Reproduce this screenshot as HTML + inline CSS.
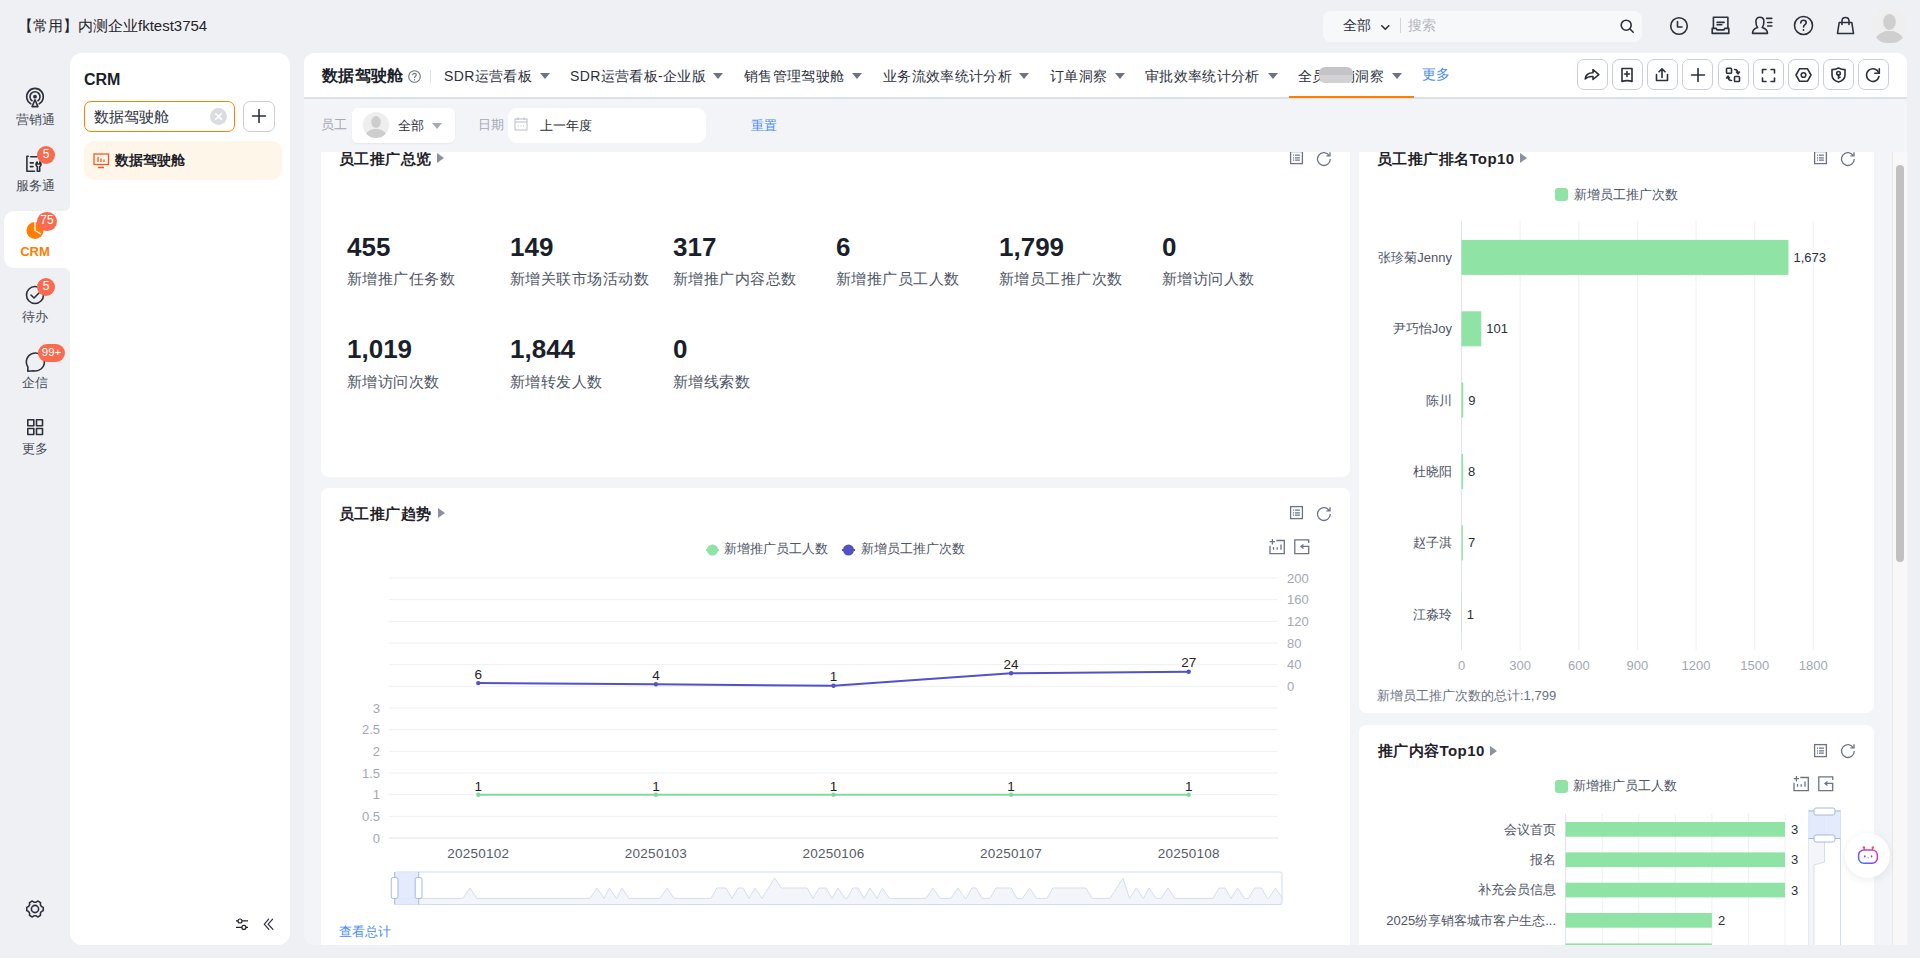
<!DOCTYPE html>
<html><head><meta charset="utf-8">
<style>
*{box-sizing:border-box;margin:0;padding:0}
html,body{width:1920px;height:958px;overflow:hidden}
body{position:relative;background:#eff0f3;font-family:"Liberation Sans",sans-serif;color:#1f2329}
.a{position:absolute}
.t{position:absolute;white-space:nowrap;line-height:1}
svg{position:absolute;overflow:visible}
.ic{fill:none;stroke:#2b303b;stroke-width:1.6;stroke-linecap:round;stroke-linejoin:round}
.badge{position:absolute;background:#f86b4f;color:#fff;border-radius:9px;font-size:12px;line-height:16px;height:18px;text-align:center}
.navt{position:absolute;left:0;width:70px;text-align:center;font-size:13px;color:#474d5a;line-height:1}
.card{position:absolute;background:#fff;border-radius:8px}
.ctitle{position:absolute;font-size:15px;letter-spacing:0.4px;font-weight:bold;color:#1f2329;line-height:1;white-space:nowrap}
.tri{position:absolute;width:0;height:0;border-top:5px solid transparent;border-bottom:5px solid transparent;border-left:7px solid #8a91a0}
.tabt{position:absolute;top:69px;font-size:14px;letter-spacing:0.35px;color:#2b303b;line-height:1;white-space:nowrap}
.tabtri{position:absolute;top:73px;width:0;height:0;border-left:5px solid transparent;border-right:5px solid transparent;border-top:6px solid #6b7385}
.tb{position:absolute;top:59px;width:31px;height:31px;border:1px solid #c9ceda;border-radius:7px;background:#fff}
.kv{position:absolute;font-size:26px;font-weight:bold;color:#1a1f2b;line-height:1;white-space:nowrap}
.kl{position:absolute;font-size:15px;letter-spacing:0.45px;color:#4e5566;line-height:1;white-space:nowrap}
.gi{fill:none;stroke:#6b7385;stroke-width:1.3}
</style></head><body>
<!-- ===== top header ===== -->
<div class="t" style="left:18px;top:18px;font-size:15px;color:#1f2329">【常用】内测企业fktest3754</div>
<div class="a" style="left:1323px;top:11px;width:319px;height:31px;background:#f7f8fa;border-radius:8px"></div>
<div class="t" style="left:1343px;top:18px;font-size:14px;color:#2b303b">全部</div>
<svg style="left:1381px;top:24.5px" width="9" height="6"><path d="M0.8 0.8 L4.3 4.3 L7.8 0.8" class="ic" stroke-width="1.3"/></svg>
<div class="a" style="left:1400px;top:18px;width:1px;height:15px;background:#d0d4dc"></div>
<div class="t" style="left:1408px;top:18px;font-size:14px;color:#b4b8c1">搜索</div>
<svg style="left:1620px;top:18.5px" width="15" height="15"><circle cx="6.2" cy="6.2" r="5" class="ic" stroke-width="1.5"/><path d="M10 10 L13.2 13.2" class="ic" stroke-width="1.5"/></svg>
<!-- clock -->
<svg style="left:1669px;top:16px" width="20" height="20"><circle cx="10" cy="10" r="8.3" class="ic"/><path d="M8.5 5.5 V11 H13" class="ic"/></svg>
<!-- inbox -->
<svg style="left:1711px;top:16px" width="20" height="20"><path d="M2.4 12.4 V1.2 H16.9 V12.4" class="ic" stroke-width="1.5" stroke-linejoin="miter"/><path d="M1.2 12.4 H5.3 L6 13.9 H13 L13.7 12.4 H17.8 V17.4 H1.2 Z" class="ic" stroke-width="1.5"/><path d="M6.1 6.4 H13.1 M6.1 8.8 H10.8" class="ic" stroke-width="1.4"/></svg>
<!-- contact -->
<svg style="left:1751px;top:16px" width="22" height="20"><path d="M1.5 17.4 C1.5 14 3.5 12.6 6.6 11.6 C5.2 10 4.9 8 4.9 5.5 C4.9 2.7 6.6 1.2 8.9 1.2 C11.2 1.2 12.9 2.7 12.9 5.5 C12.9 8 12.6 10 11.2 11.6 C14.3 12.6 16.5 14 16.5 17.4 Z" class="ic" stroke-width="1.5"/><path d="M15.6 2.4 H20.8 M16.6 6.5 H20.8 M16.6 10 H20.8" class="ic" stroke-width="1.5"/></svg>
<!-- help -->
<svg style="left:1793px;top:15px" width="21" height="21"><circle cx="10.5" cy="10.5" r="9" class="ic"/><path d="M7.8 8 C7.8 6.3 9 5.3 10.5 5.3 C12 5.3 13.2 6.3 13.2 7.8 C13.2 9.6 10.5 9.8 10.5 12" class="ic"/><circle cx="10.5" cy="15" r="0.9" fill="#2b303b"/></svg>
<!-- bag -->
<svg style="left:1836px;top:16px" width="19" height="19"><path d="M3.2 6.5 H15.8 L17.5 17.5 H1.5 Z" class="ic"/><path d="M6 8.5 V5 C6 2.8 7.3 1.5 9.5 1.5 C11.7 1.5 13 2.8 13 5 V8.5" class="ic"/></svg>
<!-- avatar -->
<div class="a" style="left:1872px;top:9px;width:35px;height:35px;border-radius:50%;background:#efefef;overflow:hidden">
  <svg style="left:0;top:0" width="35" height="35"><ellipse cx="17.5" cy="13" rx="6.3" ry="8" fill="#cfcfcf"/><path d="M3 31 C5 25 10 23.5 14 22 L21 22 C25 23.5 30 25 32 31 C28 35 7 35 3 31 Z" fill="#cfcfcf"/></svg>
</div>

<!-- ===== left nav ===== -->
<!-- 营销通 -->
<svg style="left:25px;top:86px" width="20" height="22"><path d="M5.85 17.9 A8.3 8.3 0 1 1 14.15 17.9" class="ic" stroke-width="1.7" stroke-linecap="butt"/><path d="M7.06 14.75 A5 5 0 1 1 12.94 14.75" class="ic" stroke-width="1.7" stroke-linecap="butt"/><circle cx="10" cy="10.7" r="1.9" fill="#2b303b"/><path d="M10 13.8 L7.1 20.6 H12.9 Z" class="ic" stroke-width="1.6"/></svg>
<div class="navt" style="top:113px">营销通</div>
<!-- 服务通 -->
<svg style="left:25px;top:154px" width="20" height="19"><path d="M3.2 2.2 H1.9 V17.3 H9.5" class="ic" stroke-width="1.6"/><path d="M5.6 2.7 H12" class="ic" stroke-width="1.6"/><path d="M5.3 8.9 H8.3 M5.3 12.6 H8" class="ic" stroke-width="1.5"/><path d="M12.2 8 C10.7 8.8 10.4 11.5 12.3 12.7 V17.3 H14.7 V12.7 C16.6 11.5 16.3 8.8 14.8 8 V10 H12.2 Z" class="ic" stroke-width="1.5"/></svg>
<div class="badge" style="left:37px;top:146px;width:18px">5</div>
<div class="navt" style="top:179px">服务通</div>
<!-- CRM active -->
<div class="a" style="left:4px;top:211px;width:66px;height:57px;background:#fff;border-radius:10px 0 0 10px"></div>
<div class="a" style="left:64px;top:205px;width:6px;height:6px;background:#fff"></div>
<div class="a" style="left:64px;top:205px;width:6px;height:6px;background:#eff0f3;border-radius:0 0 6px 0"></div>
<div class="a" style="left:64px;top:268px;width:6px;height:6px;background:#fff"></div>
<div class="a" style="left:64px;top:268px;width:6px;height:6px;background:#eff0f3;border-radius:0 6px 0 0"></div>
<svg style="left:26px;top:221px" width="19" height="19"><circle cx="9" cy="9.5" r="8.5" fill="#ff7d00"/><path d="M9 1 V9.5 L15 13" fill="none" stroke="#fff" stroke-width="1.3"/></svg>
<div class="badge" style="left:37px;top:212px;width:20px;height:19px;border-radius:10px;line-height:17px">75</div>
<div class="navt" style="top:245px;font-weight:bold;color:#ff7d00">CRM</div>
<!-- 待办 -->
<svg style="left:25px;top:285px" width="20" height="20"><circle cx="10" cy="10" r="8.5" class="ic"/><path d="M6 10 L9 13 L14 8" class="ic"/></svg>
<div class="badge" style="left:37px;top:278px;width:18px">5</div>
<div class="navt" style="top:310px">待办</div>
<!-- 企信 -->
<svg style="left:24.5px;top:351.5px" width="22" height="22"><path d="M8.6 18.8 A9 9 0 1 0 2.9 15 L2.8 19.2 Z" class="ic" stroke-width="1.3"/></svg>
<div class="badge" style="left:38px;top:344px;width:27px;font-size:11.5px">99+</div>
<div class="navt" style="top:376px">企信</div>
<!-- 更多 -->
<svg style="left:27px;top:419px" width="17" height="17"><rect x="0.8" y="0.8" width="6" height="6" class="ic" stroke-width="1.5"/><rect x="9.5" y="0.8" width="6" height="6" class="ic" stroke-width="1.5"/><rect x="0.8" y="9.5" width="6" height="6" class="ic" stroke-width="1.5"/><rect x="9.5" y="9.5" width="6" height="6" class="ic" stroke-width="1.5"/></svg>
<div class="navt" style="top:442px">更多</div>
<!-- settings -->
<svg style="left:23px;top:897px" width="24" height="24"><path d="M20.25 10.40 L20.25 13.60 L18.44 14.47 L17.36 16.34 L17.51 18.34 L14.73 19.94 L13.08 18.82 L10.92 18.82 L9.27 19.94 L6.49 18.34 L6.64 16.34 L5.56 14.47 L3.75 13.60 L3.75 10.40 L5.56 9.53 L6.64 7.66 L6.49 5.66 L9.27 4.06 L10.92 5.18 L13.08 5.18 L14.73 4.06 L17.51 5.66 L17.36 7.66 L18.44 9.53 Z" class="ic" stroke-width="1.5"/><circle cx="12" cy="12" r="3.6" class="ic" stroke-width="1.5"/></svg>

<!-- ===== left panel ===== -->
<div class="a" style="left:70px;top:53px;width:220px;height:892px;background:#fff;border-radius:12px"></div>
<div class="t" style="left:84px;top:72px;font-size:16px;font-weight:bold;color:#1a1f2b">CRM</div>
<div class="a" style="left:84px;top:101px;width:151px;height:31px;border:1px solid #ff8000;border-radius:7px;background:#fff"></div>
<div class="t" style="left:94px;top:109px;font-size:15px;color:#2b303b">数据驾驶舱</div>
<svg style="left:210px;top:108px" width="17" height="17"><circle cx="8.5" cy="8.5" r="8.5" fill="#d9dce3"/><path d="M5.8 5.8 L11.2 11.2 M11.2 5.8 L5.8 11.2" stroke="#fff" stroke-width="1.8" stroke-linecap="round"/></svg>
<div class="a" style="left:243px;top:101px;width:32px;height:31px;border:1px solid #c9ceda;border-radius:7px;background:#fff"></div>
<svg style="left:251px;top:108px" width="16" height="16"><path d="M8 1.5 V14.5 M1.5 8 H14.5" class="ic" stroke-width="1.5"/></svg>
<div class="a" style="left:84px;top:141px;width:198px;height:39px;background:#fef6e8;border-radius:10px"></div>
<svg style="left:93px;top:153px" width="17" height="16"><rect x="1" y="1" width="14.5" height="10.5" fill="none" stroke="#f05a2a" stroke-width="1.3"/><path d="M5 4 V9 M8 5.5 V9 M11 6.5 V9 M5 14.5 H11" stroke="#f05a2a" stroke-width="1.3" fill="none"/></svg>
<div class="t" style="left:115px;top:153px;font-size:14px;font-weight:bold;color:#1f2329">数据驾驶舱</div>
<svg style="left:0;top:0" width="300" height="958"><path d="M236 920.9 H248 M236 927.4 H248" stroke="#1f2329" stroke-width="1.15" fill="none"/><circle cx="240" cy="921" r="2" fill="#fff" stroke="#1f2329" stroke-width="1.2"/><circle cx="243.9" cy="927.4" r="2" fill="#fff" stroke="#1f2329" stroke-width="1.2"/><path d="M268.6 919.1 L264.3 924.2 L268.9 929.4 M272.6 919.1 L268.2 924.2 L272.9 929.4" stroke="#2b303b" stroke-width="1.2" fill="none" stroke-linecap="round"/></svg>

<!-- ===== main panel ===== -->
<div class="a" style="left:304px;top:53px;width:1603px;height:892px;background:#f3f4f8;border-radius:10px;overflow:hidden">
  <div class="a" style="left:0;top:0;width:1603px;height:46px;background:#fff;border-bottom:2px solid #dae1eb"></div>
</div>
<div class="t" style="left:322px;top:68px;font-size:16px;font-weight:bold;letter-spacing:0.25px;color:#1a1f2b">数据驾驶舱</div>
<svg style="left:408px;top:69.7px" width="13" height="13"><circle cx="6.5" cy="6.5" r="5.8" fill="none" stroke="#6b7385" stroke-width="1.1"/><path d="M4.7 5.2 C4.7 4.1 5.5 3.4 6.5 3.4 C7.5 3.4 8.3 4.1 8.3 5 C8.3 6.2 6.5 6.3 6.5 7.9" fill="none" stroke="#6b7385" stroke-width="1.1"/><circle cx="6.5" cy="9.7" r="0.65" fill="#6b7385"/></svg>
<div class="a" style="left:430px;top:70px;width:1px;height:13px;background:#dfe2e8"></div>

<div class="tabt" style="left:444px">SDR运营看板</div><div class="tabtri" style="left:540px"></div>
<div class="tabt" style="left:570px">SDR运营看板-企业版</div><div class="tabtri" style="left:713px"></div>
<div class="tabt" style="left:744px">销售管理驾驶舱</div><div class="tabtri" style="left:852px"></div>
<div class="tabt" style="left:883px">业务流效率统计分析</div><div class="tabtri" style="left:1019px"></div>
<div class="tabt" style="left:1050px">订单洞察</div><div class="tabtri" style="left:1115px"></div>
<div class="tabt" style="left:1145px">审批效率统计分析</div><div class="tabtri" style="left:1268px"></div>
<div class="tabt" style="left:1298px">全员营销洞察</div><div class="tabtri" style="left:1392px"></div>
<div class="a" style="left:1319px;top:67px;width:34px;height:16px;background:linear-gradient(#c4c4c6 0%,#c4c4c6 50%,#d2d2d4 50%,#d2d2d4 100%);border-radius:6px;filter:blur(0.5px)"></div>
<div class="tabt" style="left:1422px;top:67px;color:#4a8cf7">更多</div>
<div class="a" style="left:1289px;top:96px;width:125px;height:2px;background:#ff8000"></div>

<!-- toolbar buttons -->
<div class="tb" style="left:1577.0px"></div>
<div class="tb" style="left:1612.0px"></div>
<div class="tb" style="left:1647.0px"></div>
<div class="tb" style="left:1682.0px"></div>
<div class="tb" style="left:1718.0px"></div>
<div class="tb" style="left:1753.0px"></div>
<div class="tb" style="left:1788.0px"></div>
<div class="tb" style="left:1823.0px"></div>
<div class="tb" style="left:1858.0px"></div>
<!-- share -->
<svg style="left:1584px;top:66.8px" width="16" height="16"><path d="M1.2 12 C1.5 8 4 5.7 9 5.7 V2.5 L14.8 7.7 L9 12.5 V9.5 C5.5 9.3 3 10 1.2 12 Z" class="ic" stroke-width="1.10"/></svg>
<!-- bookmark plus -->
<svg style="left:1620px;top:66.8px" width="14" height="16"><path d="M2 1.5 H12 V14.5 C9.5 13.3 4.5 13.3 2 14.5 Z" class="ic" stroke-width="1.10" stroke-linejoin="miter"/><path d="M7 4.5 V9.5 M4.5 7 H9.5" class="ic" stroke-width="1.00"/></svg>
<!-- upload -->
<svg style="left:1654px;top:66.8px" width="16" height="16"><path d="M2.5 7.5 V13.5 H13.5 V7.5" class="ic" stroke-width="1.30" stroke-linejoin="miter"/><path d="M8 10.5 V1.8 M5 4.8 L8 1.8 L11 4.8" class="ic" stroke-width="1.10"/></svg>
<!-- plus -->
<svg style="left:1690px;top:66.8px" width="16" height="16"><path d="M8 1.5 V14.5 M1.5 8 H14.5" class="ic" stroke-width="1.3"/></svg>
<!-- switch -->
<svg style="left:1725px;top:66.8px" width="16" height="16"><rect x="1.5" y="1.3" width="5" height="5" rx="0.8" class="ic" stroke-width="1.10"/><rect x="9.5" y="9.5" width="5" height="5" rx="0.8" class="ic" stroke-width="1.10"/><path d="M9.5 2.5 C12 2.5 13 4 13 6.5 M11.5 5 L13 6.8 L14.5 5" class="ic" stroke-width="1.00"/><path d="M6.5 13.5 C4 13.5 3 12 3 9.5 M1.5 11 L3 9.2 L4.5 11" class="ic" stroke-width="1.00"/></svg>
<!-- fullscreen -->
<svg style="left:1761px;top:67.5px" width="15" height="15"><path d="M1.5 5 V1.5 H5 M10 1.5 H13.5 V5 M13.5 10 V13.5 H10 M5 13.5 H1.5 V10" class="ic" stroke-width="1.30" stroke-linecap="butt" stroke-linejoin="miter"/></svg>
<!-- hex settings -->
<svg style="left:1795px;top:66.8px" width="17" height="16"><path d="M4.5 1.8 H12.5 L16 8 L12.5 14.2 H4.5 L1 8 Z" class="ic" stroke-width="1.20"/><circle cx="8.5" cy="8" r="2.3" class="ic" stroke-width="1.20"/></svg>
<!-- shield key -->
<svg style="left:1831px;top:66.8px" width="15" height="16"><path d="M7.5 1 C9.5 2 11.5 2.6 14 2.6 V8 C14 11.5 11.5 13.8 7.5 15 C3.5 13.8 1 11.5 1 8 V2.6 C3.5 2.6 5.5 2 7.5 1 Z" class="ic" stroke-width="1.10"/><circle cx="7.5" cy="6.3" r="1.8" class="ic" stroke-width="1.00"/><path d="M7.5 8 V11.5 M7.5 10.3 H9" class="ic" stroke-width="1.00"/></svg>
<!-- refresh -->
<svg style="left:1865px;top:66.8px" width="16" height="16"><path d="M13.8 6 A6.3 6.3 0 1 0 14 9.5" class="ic" stroke-width="1.30"/><path d="M14.3 1.8 V6.3 H9.8" class="ic" stroke-width="1.30"/></svg>

<!-- filter bar -->
<div class="t" style="left:321px;top:118px;font-size:13px;color:#a3a8b3">员工</div>
<div class="a" style="left:352px;top:108px;width:103px;height:35px;background:#fff;border-radius:6px;box-shadow:0 1px 2px rgba(0,0,0,0.06)"></div>
<div class="a" style="left:363px;top:112px;width:26px;height:26px;border-radius:50%;background:#eeeeee;overflow:hidden">
  <svg style="left:0;top:0" width="26" height="26"><ellipse cx="13" cy="10" rx="4.8" ry="6" fill="#cdcdcd"/><path d="M2 23.5 C4 19 7.5 18 10.5 17 L15.5 17 C18.5 18 22 19 24 23.5 C20 27 6 27 2 23.5 Z" fill="#cdcdcd"/></svg>
</div>
<div class="t" style="left:398px;top:118.5px;font-size:13px;color:#2b303b">全部</div>
<div class="a" style="left:432.3px;top:123px;width:0;height:0;border-left:5.7px solid transparent;border-right:5.7px solid transparent;border-top:6px solid #a5abb8"></div>
<div class="t" style="left:478px;top:118px;font-size:13px;color:#a3a8b3">日期</div>
<div class="a" style="left:508px;top:108px;width:198px;height:35px;background:#fff;border-radius:9px"></div>
<svg style="left:514px;top:117px" width="14" height="14"><rect x="1" y="2" width="12" height="11" fill="none" stroke="#b8bdc7" stroke-width="1"/><path d="M1 5 H13 M4 0.5 V3 M10 0.5 V3" stroke="#b8bdc7" stroke-width="1" fill="none"/><path d="M4 9 H5 M6.5 9 H7.5 M9 9 H10" stroke="#b8bdc7" stroke-width="1"/></svg>
<div class="t" style="left:540px;top:118.7px;font-size:13px;color:#2b303b">上一年度</div>
<div class="t" style="left:751px;top:120px;font-size:12.5px;color:#4a8cf7">重置</div>

<div class="a" style="left:0;top:0;width:1920px;height:945px;clip-path:inset(152px 0 0 0)">
<div class="card" style="left:321px;top:133px;width:1029px;height:344px"></div>
<div class="card" style="left:321px;top:488px;width:1029px;height:470px"></div>
<div class="card" style="left:1359px;top:133px;width:515px;height:580px"></div>
<div class="card" style="left:1359px;top:725px;width:515px;height:240px"></div>
<div class="ctitle" style="left:339px;top:150.5px">员工推广总览</div>
<div class="tri" style="left:437px;top:153px"></div>
<svg style="left:1289px;top:151px" width="14" height="14"><rect x="1.6" y="0.6" width="11.8" height="12" class="gi" stroke-width="1.2"/><path d="M4 4.1 H5.1 M6 4.1 H10.9 M4 6.8 H5.1 M6 6.8 H10.9 M4 9.2 H5.1 M6 9.2 H10.9" class="gi" stroke-width="1.1"/></svg>
<svg style="left:1316px;top:150.5px" width="16" height="16"><path d="M13.3 4.6 A6.4 6.4 0 1 0 14.3 8" class="gi" stroke-width="1.3"/><path d="M14 1.2 V4.8 H10.4" class="gi" stroke-width="1.3"/></svg>
<div class="ctitle" style="left:339px;top:505.5px">员工推广趋势</div>
<div class="tri" style="left:438px;top:508px"></div>
<svg style="left:1289px;top:506px" width="14" height="14"><rect x="1.6" y="0.6" width="11.8" height="12" class="gi" stroke-width="1.2"/><path d="M4 4.1 H5.1 M6 4.1 H10.9 M4 6.8 H5.1 M6 6.8 H10.9 M4 9.2 H5.1 M6 9.2 H10.9" class="gi" stroke-width="1.1"/></svg>
<svg style="left:1316px;top:505.5px" width="16" height="16"><path d="M13.3 4.6 A6.4 6.4 0 1 0 14.3 8" class="gi" stroke-width="1.3"/><path d="M14 1.2 V4.8 H10.4" class="gi" stroke-width="1.3"/></svg>
<div class="ctitle" style="left:1377px;top:150.5px">员工推广排名Top10</div>
<div class="tri" style="left:1520px;top:153px"></div>
<svg style="left:1813px;top:151px" width="14" height="14"><rect x="1.6" y="0.6" width="11.8" height="12" class="gi" stroke-width="1.2"/><path d="M4 4.1 H5.1 M6 4.1 H10.9 M4 6.8 H5.1 M6 6.8 H10.9 M4 9.2 H5.1 M6 9.2 H10.9" class="gi" stroke-width="1.1"/></svg>
<svg style="left:1840px;top:150.5px" width="16" height="16"><path d="M13.3 4.6 A6.4 6.4 0 1 0 14.3 8" class="gi" stroke-width="1.3"/><path d="M14 1.2 V4.8 H10.4" class="gi" stroke-width="1.3"/></svg>
<div class="ctitle" style="left:1378px;top:743.0px">推广内容Top10</div>
<div class="tri" style="left:1490px;top:745.5px"></div>
<svg style="left:1813px;top:743.5px" width="14" height="14"><rect x="1.6" y="0.6" width="11.8" height="12" class="gi" stroke-width="1.2"/><path d="M4 4.1 H5.1 M6 4.1 H10.9 M4 6.8 H5.1 M6 6.8 H10.9 M4 9.2 H5.1 M6 9.2 H10.9" class="gi" stroke-width="1.1"/></svg>
<svg style="left:1840px;top:743.0px" width="16" height="16"><path d="M13.3 4.6 A6.4 6.4 0 1 0 14.3 8" class="gi" stroke-width="1.3"/><path d="M14 1.2 V4.8 H10.4" class="gi" stroke-width="1.3"/></svg>
<div class="kv" style="left:347px;top:234px">455</div>
<div class="kl" style="left:347px;top:271.0px">新增推广任务数</div>
<div class="kv" style="left:510px;top:234px">149</div>
<div class="kl" style="left:510px;top:271.0px">新增关联市场活动数</div>
<div class="kv" style="left:673px;top:234px">317</div>
<div class="kl" style="left:673px;top:271.0px">新增推广内容总数</div>
<div class="kv" style="left:836px;top:234px">6</div>
<div class="kl" style="left:836px;top:271.0px">新增推广员工人数</div>
<div class="kv" style="left:999px;top:234px">1,799</div>
<div class="kl" style="left:999px;top:271.0px">新增员工推广次数</div>
<div class="kv" style="left:1162px;top:234px">0</div>
<div class="kl" style="left:1162px;top:271.0px">新增访问人数</div>
<div class="kv" style="left:347px;top:336px">1,019</div>
<div class="kl" style="left:347px;top:374.0px">新增访问次数</div>
<div class="kv" style="left:510px;top:336px">1,844</div>
<div class="kl" style="left:510px;top:374.0px">新增转发人数</div>
<div class="kv" style="left:673px;top:336px">0</div>
<div class="kl" style="left:673px;top:374.0px">新增线索数</div>
<svg style="left:700px;top:541px" width="280" height="18"><path d="M6 9 H19" stroke="#8ee3a5" stroke-width="2"/><circle cx="12.5" cy="9" r="5.5" fill="#8ee3a5"/><path d="M142 9 H155" stroke="#5152c6" stroke-width="2"/><circle cx="148.5" cy="9" r="5.5" fill="#5152c6"/></svg>
<div class="t" style="left:724px;top:542px;font-size:13px;color:#4e5566">新增推广员工人数</div>
<div class="t" style="left:861px;top:542px;font-size:13px;color:#4e5566">新增员工推广次数</div>
<svg style="left:1269px;top:539px" width="17" height="16"><path d="M7.3 1.5 H15.3 V14.6 H1 V6.7" class="gi" stroke-width="1.15" stroke-linejoin="miter"/><path d="M3.4 0 V5.4 M0.7 2.7 H6.1" class="gi" stroke-width="1.1"/><path d="M4.5 8 V10.7 M8.2 8.2 V10.7 M12 5.4 V10.7" class="gi" stroke-width="1.1"/></svg>
<svg style="left:1294px;top:539px" width="16" height="16"><path d="M14.7 4 V0.8 H0.8 V14.7 H14.7 V7.4 H7" class="gi" stroke-width="1.15" stroke-linejoin="miter"/><path d="M9.5 5.4 L7 7.4 L9.5 9.6" class="gi" stroke-width="1.15"/></svg>
<svg style="left:0;top:0" width="1920" height="958"><path d="M389 578.00 H1278" stroke="#eef0f3" stroke-width="1"/><path d="M389 599.67 H1278" stroke="#eef0f3" stroke-width="1"/><path d="M389 621.33 H1278" stroke="#eef0f3" stroke-width="1"/><path d="M389 643.00 H1278" stroke="#eef0f3" stroke-width="1"/><path d="M389 664.67 H1278" stroke="#eef0f3" stroke-width="1"/><path d="M389 686.33 H1278" stroke="#eef0f3" stroke-width="1"/><path d="M389 708.00 H1278" stroke="#eef0f3" stroke-width="1"/><path d="M389 729.67 H1278" stroke="#eef0f3" stroke-width="1"/><path d="M389 751.33 H1278" stroke="#eef0f3" stroke-width="1"/><path d="M389 773.00 H1278" stroke="#eef0f3" stroke-width="1"/><path d="M389 794.67 H1278" stroke="#eef0f3" stroke-width="1"/><path d="M389 816.33 H1278" stroke="#eef0f3" stroke-width="1"/><path d="M389 838.00 H1278" stroke="#dfe4ee" stroke-width="1"/><polyline points="478.3,683.1 655.9,684.2 833.5,685.8 1011.1,673.3 1188.7,671.7" fill="none" stroke="#5152c6" stroke-width="2"/><circle cx="478.3" cy="683.1" r="2.2" fill="#5152c6"/><circle cx="655.9" cy="684.2" r="2.2" fill="#5152c6"/><circle cx="833.5" cy="685.8" r="2.2" fill="#5152c6"/><circle cx="1011.1" cy="673.3" r="2.2" fill="#5152c6"/><circle cx="1188.7" cy="671.7" r="2.2" fill="#5152c6"/><path d="M478.3 794.67 H1188.7" stroke="#7fdc9b" stroke-width="2"/><circle cx="478.3" cy="794.7" r="2.2" fill="#7fdc9b"/><circle cx="655.9" cy="794.7" r="2.2" fill="#7fdc9b"/><circle cx="833.5" cy="794.7" r="2.2" fill="#7fdc9b"/><circle cx="1011.1" cy="794.7" r="2.2" fill="#7fdc9b"/><circle cx="1188.7" cy="794.7" r="2.2" fill="#7fdc9b"/></svg>
<div class="t" style="left:458.3px;width:40px;text-align:center;top:667.6px;font-size:13.5px;color:#1f2329">6</div>
<div class="t" style="left:635.9px;width:40px;text-align:center;top:668.7px;font-size:13.5px;color:#1f2329">4</div>
<div class="t" style="left:813.5px;width:40px;text-align:center;top:670.3px;font-size:13.5px;color:#1f2329">1</div>
<div class="t" style="left:991.1px;width:40px;text-align:center;top:657.8px;font-size:13.5px;color:#1f2329">24</div>
<div class="t" style="left:1168.7px;width:40px;text-align:center;top:656.2px;font-size:13.5px;color:#1f2329">27</div>
<div class="t" style="left:458.3px;width:40px;text-align:center;top:780.2px;font-size:13.5px;color:#1f2329">1</div>
<div class="t" style="left:635.9px;width:40px;text-align:center;top:780.2px;font-size:13.5px;color:#1f2329">1</div>
<div class="t" style="left:813.5px;width:40px;text-align:center;top:780.2px;font-size:13.5px;color:#1f2329">1</div>
<div class="t" style="left:991.1px;width:40px;text-align:center;top:780.2px;font-size:13.5px;color:#1f2329">1</div>
<div class="t" style="left:1168.7px;width:40px;text-align:center;top:780.2px;font-size:13.5px;color:#1f2329">1</div>
<div class="t" style="left:1287px;top:571.5px;font-size:13px;color:#a3a8b3">200</div>
<div class="t" style="left:1287px;top:593.2px;font-size:13px;color:#a3a8b3">160</div>
<div class="t" style="left:1287px;top:614.8px;font-size:13px;color:#a3a8b3">120</div>
<div class="t" style="left:1287px;top:636.5px;font-size:13px;color:#a3a8b3">80</div>
<div class="t" style="left:1287px;top:658.2px;font-size:13px;color:#a3a8b3">40</div>
<div class="t" style="left:1287px;top:679.8px;font-size:13px;color:#a3a8b3">0</div>
<div class="t" style="left:330px;width:50px;text-align:right;top:701.5px;font-size:13px;color:#a3a8b3">3</div>
<div class="t" style="left:330px;width:50px;text-align:right;top:723.2px;font-size:13px;color:#a3a8b3">2.5</div>
<div class="t" style="left:330px;width:50px;text-align:right;top:744.8px;font-size:13px;color:#a3a8b3">2</div>
<div class="t" style="left:330px;width:50px;text-align:right;top:766.5px;font-size:13px;color:#a3a8b3">1.5</div>
<div class="t" style="left:330px;width:50px;text-align:right;top:788.2px;font-size:13px;color:#a3a8b3">1</div>
<div class="t" style="left:330px;width:50px;text-align:right;top:809.8px;font-size:13px;color:#a3a8b3">0.5</div>
<div class="t" style="left:330px;width:50px;text-align:right;top:831.5px;font-size:13px;color:#a3a8b3">0</div>
<div class="t" style="left:428.3px;width:100px;text-align:center;top:847px;font-size:13.5px;letter-spacing:0.25px;color:#555b68">20250102</div>
<div class="t" style="left:605.9px;width:100px;text-align:center;top:847px;font-size:13.5px;letter-spacing:0.25px;color:#555b68">20250103</div>
<div class="t" style="left:783.5px;width:100px;text-align:center;top:847px;font-size:13.5px;letter-spacing:0.25px;color:#555b68">20250106</div>
<div class="t" style="left:961.1px;width:100px;text-align:center;top:847px;font-size:13.5px;letter-spacing:0.25px;color:#555b68">20250107</div>
<div class="t" style="left:1138.7px;width:100px;text-align:center;top:847px;font-size:13.5px;letter-spacing:0.25px;color:#555b68">20250108</div>
<svg style="left:0;top:0" width="1920" height="958"><polygon points="395.0,898.4 463.0,898.4 470.0,888.0 477.0,898.4 590.0,898.4 597.0,888.0 604.0,898.4 604.0,898.4 609.5,888.0 616.5,898.4 616.5,898.4 622.0,888.0 629.0,898.4 660.0,898.4 667.0,888.0 674.0,898.4 711.0,898.4 717.0,888.0 726.0,888.0 732.0,898.4 732.0,898.4 738.0,888.0 743.0,888.0 749.0,898.4 749.0,898.4 755.0,888.0 762.0,898.4 762.0,898.4 774.5,878.0 781.5,888.0 807.0,888.0 813.0,898.4 813.0,898.4 819.0,888.0 826.0,888.0 832.0,898.4 832.0,898.4 838.0,888.0 845.0,898.4 847.0,898.4 853.0,888.0 858.0,888.0 864.0,898.4 864.0,898.4 870.0,888.0 877.0,898.4 877.0,898.4 882.4,888.0 889.4,898.4 926.0,898.4 933.0,888.0 940.0,898.4 951.0,898.4 958.0,888.0 965.0,898.4 966.0,898.4 972.0,888.0 976.0,888.0 982.0,898.4 990.0,898.4 996.0,888.0 1011.0,888.0 1017.0,898.4 1022.5,898.4 1029.5,888.0 1036.5,898.4 1047.0,898.4 1053.0,888.0 1086.0,888.0 1092.0,898.4 1110.0,898.4 1123.0,878.0 1129.5,898.4 1129.5,898.4 1136.4,888.0 1143.4,898.4 1143.4,898.4 1149.0,888.0 1156.0,898.4 1161.0,898.4 1168.0,888.0 1175.0,898.4 1213.0,898.4 1219.0,888.0 1225.0,888.0 1231.0,898.4 1231.0,898.4 1237.6,888.0 1244.6,898.4 1248.5,898.4 1254.5,888.0 1261.5,888.0 1267.5,898.4 1268.6,898.4 1275.6,888.0 1282.6,898.4 1282.6,898.4 1282,904.5 395,904.5" fill="#f3f5fb"/><polyline points="395.0,898.4 463.0,898.4 470.0,888.0 477.0,898.4 590.0,898.4 597.0,888.0 604.0,898.4 604.0,898.4 609.5,888.0 616.5,898.4 616.5,898.4 622.0,888.0 629.0,898.4 660.0,898.4 667.0,888.0 674.0,898.4 711.0,898.4 717.0,888.0 726.0,888.0 732.0,898.4 732.0,898.4 738.0,888.0 743.0,888.0 749.0,898.4 749.0,898.4 755.0,888.0 762.0,898.4 762.0,898.4 774.5,878.0 781.5,888.0 807.0,888.0 813.0,898.4 813.0,898.4 819.0,888.0 826.0,888.0 832.0,898.4 832.0,898.4 838.0,888.0 845.0,898.4 847.0,898.4 853.0,888.0 858.0,888.0 864.0,898.4 864.0,898.4 870.0,888.0 877.0,898.4 877.0,898.4 882.4,888.0 889.4,898.4 926.0,898.4 933.0,888.0 940.0,898.4 951.0,898.4 958.0,888.0 965.0,898.4 966.0,898.4 972.0,888.0 976.0,888.0 982.0,898.4 990.0,898.4 996.0,888.0 1011.0,888.0 1017.0,898.4 1022.5,898.4 1029.5,888.0 1036.5,898.4 1047.0,898.4 1053.0,888.0 1086.0,888.0 1092.0,898.4 1110.0,898.4 1123.0,878.0 1129.5,898.4 1129.5,898.4 1136.4,888.0 1143.4,898.4 1143.4,898.4 1149.0,888.0 1156.0,898.4 1161.0,898.4 1168.0,888.0 1175.0,898.4 1213.0,898.4 1219.0,888.0 1225.0,888.0 1231.0,898.4 1231.0,898.4 1237.6,888.0 1244.6,898.4 1248.5,898.4 1254.5,888.0 1261.5,888.0 1267.5,898.4 1268.6,898.4 1275.6,888.0 1282.6,898.4 1282.6,898.4" fill="none" stroke="#d5ddee" stroke-width="1"/><rect x="394.7" y="872" width="887.3" height="32.5" rx="2" fill="none" stroke="#d2dbee" stroke-width="1"/><rect x="394.7" y="872" width="24" height="32.5" fill="#dfe8fb" fill-opacity="0.85"/><path d="M394.7 872 V904.5 M418.7 872 V904.5" stroke="#a9b8d8" stroke-width="1"/><rect x="391.2" y="877.5" width="6.8" height="21" rx="2" fill="#fff" stroke="#a9b8d8" stroke-width="1"/><rect x="415.2" y="877.5" width="6.8" height="21" rx="2" fill="#fff" stroke="#a9b8d8" stroke-width="1"/></svg>
<div class="t" style="left:339px;top:925px;font-size:13px;color:#4a8cf7">查看总计</div>
<div class="a" style="left:1555px;top:188px;width:13px;height:13px;border-radius:3px;background:#8ee3a5"></div>
<div class="t" style="left:1574px;top:187.5px;font-size:13px;color:#4e5566">新增员工推广次数</div>
<svg style="left:0;top:0" width="1920" height="958"><path d="M1520.1 221 V650" stroke="#eef0f3" stroke-width="1"/><path d="M1578.8 221 V650" stroke="#eef0f3" stroke-width="1"/><path d="M1637.4 221 V650" stroke="#eef0f3" stroke-width="1"/><path d="M1696.0 221 V650" stroke="#eef0f3" stroke-width="1"/><path d="M1754.7 221 V650" stroke="#eef0f3" stroke-width="1"/><path d="M1813.3 221 V650" stroke="#eef0f3" stroke-width="1"/><path d="M1461.5 221 V650" stroke="#dfe3ec" stroke-width="1"/><rect x="1461.5" y="239.9" width="326.96" height="35" fill="#8ee3a5"/><rect x="1461.5" y="311.3" width="19.74" height="35" fill="#8ee3a5"/><rect x="1461.5" y="382.6" width="1.76" height="35" fill="#8ee3a5"/><rect x="1461.5" y="454.0" width="1.56" height="35" fill="#8ee3a5"/><rect x="1461.5" y="525.4" width="1.37" height="35" fill="#8ee3a5"/><rect x="1461.5" y="596.8" width="0.20" height="35" fill="#8ee3a5"/></svg>
<div class="t" style="left:1352px;width:100px;text-align:right;top:250.9px;font-size:13px;color:#4e5566">张珍菊Jenny</div>
<div class="t" style="left:1793.5px;top:250.9px;font-size:13px;color:#2b303b">1,673</div>
<div class="t" style="left:1352px;width:100px;text-align:right;top:322.3px;font-size:13px;color:#4e5566">尹巧怡Joy</div>
<div class="t" style="left:1486.2px;top:322.3px;font-size:13px;color:#2b303b">101</div>
<div class="t" style="left:1352px;width:100px;text-align:right;top:393.6px;font-size:13px;color:#4e5566">陈川</div>
<div class="t" style="left:1468.3px;top:393.6px;font-size:13px;color:#2b303b">9</div>
<div class="t" style="left:1352px;width:100px;text-align:right;top:465.0px;font-size:13px;color:#4e5566">杜晓阳</div>
<div class="t" style="left:1468.1px;top:465.0px;font-size:13px;color:#2b303b">8</div>
<div class="t" style="left:1352px;width:100px;text-align:right;top:536.4px;font-size:13px;color:#4e5566">赵子淇</div>
<div class="t" style="left:1467.9px;top:536.4px;font-size:13px;color:#2b303b">7</div>
<div class="t" style="left:1352px;width:100px;text-align:right;top:607.8px;font-size:13px;color:#4e5566">江淼玲</div>
<div class="t" style="left:1466.7px;top:607.8px;font-size:13px;color:#2b303b">1</div>
<div class="t" style="left:1431.5px;width:60px;text-align:center;top:658.5px;font-size:13px;color:#a3a8b3">0</div>
<div class="t" style="left:1490.1px;width:60px;text-align:center;top:658.5px;font-size:13px;color:#a3a8b3">300</div>
<div class="t" style="left:1548.8px;width:60px;text-align:center;top:658.5px;font-size:13px;color:#a3a8b3">600</div>
<div class="t" style="left:1607.4px;width:60px;text-align:center;top:658.5px;font-size:13px;color:#a3a8b3">900</div>
<div class="t" style="left:1666.0px;width:60px;text-align:center;top:658.5px;font-size:13px;color:#a3a8b3">1200</div>
<div class="t" style="left:1724.7px;width:60px;text-align:center;top:658.5px;font-size:13px;color:#a3a8b3">1500</div>
<div class="t" style="left:1783.3px;width:60px;text-align:center;top:658.5px;font-size:13px;color:#a3a8b3">1800</div>
<div class="t" style="left:1377px;top:689px;font-size:13px;color:#6b7385">新增员工推广次数的总计:1,799</div>
<div class="a" style="left:1555px;top:780px;width:13px;height:13px;border-radius:3px;background:#8ee3a5"></div>
<div class="t" style="left:1573px;top:779px;font-size:13px;color:#4e5566">新增推广员工人数</div>
<svg style="left:1793px;top:776px" width="17" height="16"><path d="M7.3 1.5 H15.3 V14.6 H1 V6.7" class="gi" stroke-width="1.15" stroke-linejoin="miter"/><path d="M3.4 0 V5.4 M0.7 2.7 H6.1" class="gi" stroke-width="1.1"/><path d="M4.5 8 V10.7 M8.2 8.2 V10.7 M12 5.4 V10.7" class="gi" stroke-width="1.1"/></svg>
<svg style="left:1818px;top:776px" width="16" height="16"><path d="M14.7 4 V0.8 H0.8 V14.7 H14.7 V7.4 H7" class="gi" stroke-width="1.15" stroke-linejoin="miter"/><path d="M9.5 5.4 L7 7.4 L9.5 9.6" class="gi" stroke-width="1.15"/></svg>
<svg style="left:0;top:0" width="1920" height="958"><path d="M1602.2 814 V960" stroke="#eef0f3" stroke-width="1"/><path d="M1638.7 814 V960" stroke="#eef0f3" stroke-width="1"/><path d="M1675.3 814 V960" stroke="#eef0f3" stroke-width="1"/><path d="M1711.9 814 V960" stroke="#eef0f3" stroke-width="1"/><path d="M1748.4 814 V960" stroke="#eef0f3" stroke-width="1"/><path d="M1785.0 814 V960" stroke="#eef0f3" stroke-width="1"/><path d="M1565.6 814 V960" stroke="#dfe3ec" stroke-width="1"/><rect x="1565.6" y="822.0" width="219.4" height="14.7" fill="#8ee3a5"/><rect x="1565.6" y="852.4" width="219.4" height="14.7" fill="#8ee3a5"/><rect x="1565.6" y="882.7" width="219.4" height="14.7" fill="#8ee3a5"/><rect x="1565.6" y="913.0" width="146.3" height="14.7" fill="#8ee3a5"/><rect x="1565.6" y="943.4" width="146.3" height="14.7" fill="#8ee3a5"/><rect x="1808.5" y="811" width="32" height="150" fill="none" stroke="#d2dbee" stroke-width="1"/><polygon points="1808.5,961 1808.5,811 1824.5,811 1824.5,862 1814,865 1814,961" fill="#f3f5fb"/><polyline points="1814,961 1814,865 1824.5,862 1824.5,811" fill="none" stroke="#d5ddee" stroke-width="1"/><rect x="1808.5" y="811" width="32" height="27.5" fill="#dfe8fb" fill-opacity="0.85"/><path d="M1808.5 811 H1840.5 M1808.5 838.5 H1840.5" stroke="#a9b8d8" stroke-width="1"/><rect x="1814" y="808" width="21" height="7" rx="2" fill="#fff" stroke="#a9b8d8" stroke-width="1"/><rect x="1814" y="835" width="21" height="7" rx="2" fill="#fff" stroke="#a9b8d8" stroke-width="1"/></svg>
<div class="t" style="left:1256px;width:300px;text-align:right;top:822.6px;font-size:13px;color:#4e5566">会议首页</div>
<div class="t" style="left:1791.0px;top:822.9px;font-size:13px;color:#2b303b">3</div>
<div class="t" style="left:1256px;width:300px;text-align:right;top:853.0px;font-size:13px;color:#4e5566">报名</div>
<div class="t" style="left:1791.0px;top:853.2px;font-size:13px;color:#2b303b">3</div>
<div class="t" style="left:1256px;width:300px;text-align:right;top:883.3px;font-size:13px;color:#4e5566">补充会员信息</div>
<div class="t" style="left:1791.0px;top:883.6px;font-size:13px;color:#2b303b">3</div>
<div class="t" style="left:1256px;width:300px;text-align:right;top:913.6px;font-size:13px;color:#4e5566">2025纷享销客城市客户生态...</div>
<div class="t" style="left:1717.9px;top:913.9px;font-size:13px;color:#2b303b">2</div>
<div class="a" style="left:1892px;top:152px;width:15px;height:793px;background:#f8f8f8;border-left:1px solid #e8e8e8"></div>
<div class="a" style="left:1896px;top:165px;width:8px;height:397px;background:#c1c1c1;border-radius:4px"></div>
</div>
<div class="a" style="left:1845px;top:833px;width:45px;height:45px;border-radius:50%;background:#fff;box-shadow:0 2px 8px rgba(0,0,0,0.08)"></div>
<svg style="left:1857px;top:845px" width="22" height="20"><defs><linearGradient id="rg" x1="0" y1="1" x2="1" y2="0"><stop offset="0" stop-color="#2f86ff"/><stop offset="0.45" stop-color="#8a3dff"/><stop offset="1" stop-color="#ff3d8f"/></linearGradient></defs><rect x="1.6" y="5" width="18.8" height="13.2" rx="5.2" fill="none" stroke="url(#rg)" stroke-width="1.5"/><path d="M7.5 5 L7 2.6 M15.2 5 L15.7 2.6" stroke="#f2428f" stroke-width="1.3"/><circle cx="6.9" cy="2.4" r="1.2" fill="#f2428f"/><circle cx="15.8" cy="2.4" r="1.2" fill="#f5477f"/><ellipse cx="7.8" cy="11.4" rx="0.85" ry="1.1" fill="#6a4cff"/><ellipse cx="14.6" cy="11.4" rx="0.85" ry="1.1" fill="#8a4cff"/><path d="M10.6 12.5 L11.2 13 L11.8 12.5" stroke="#7a4cff" stroke-width="0.9" fill="none"/></svg>
</body></html>
